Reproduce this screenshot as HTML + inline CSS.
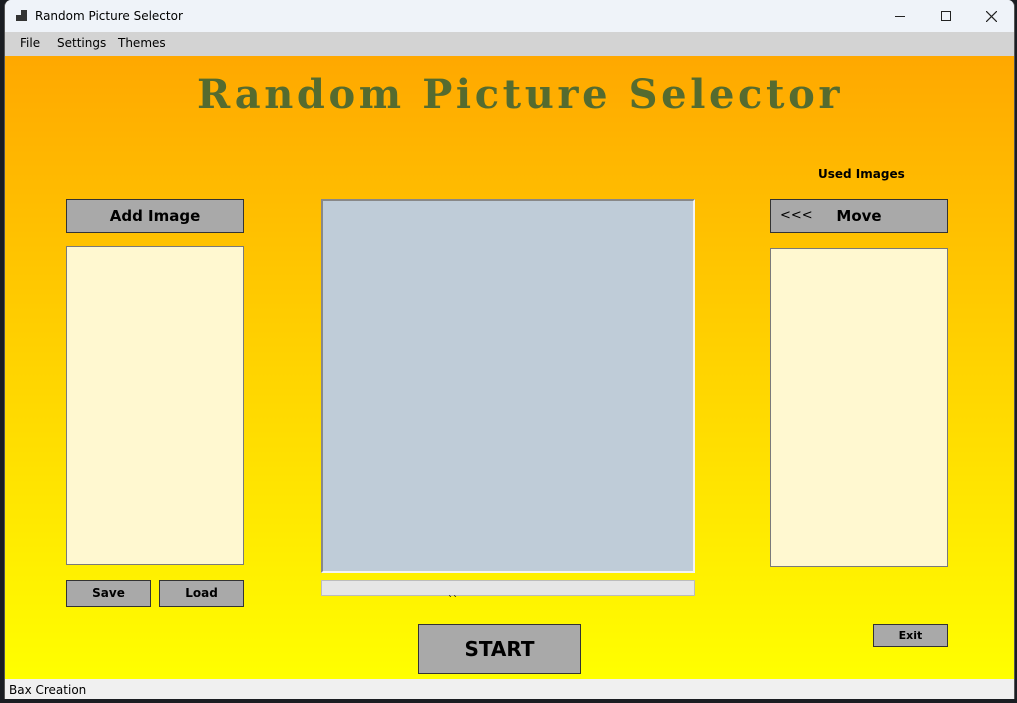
<!DOCTYPE html>
<html><head><style>
*{margin:0;padding:0;box-sizing:border-box}
body{width:1017px;height:703px;background:#1a1d22;position:relative;overflow:hidden;font-family:"Segoe UI","DejaVu Sans","Liberation Sans",sans-serif}
.win{position:absolute;left:4px;top:0;width:1011px;height:699px;background:#f0f0f0;border-radius:7px 7px 0 0;overflow:hidden;border-left:1px solid #555;border-right:1px solid #555}
.title{position:absolute;left:0;top:0;width:100%;height:32px;background:#eff3f9;font-size:12px;color:#000}
.menu{position:absolute;left:0;top:32px;width:100%;height:24px;background:#d3d3d3;font-size:12px}
.menu span{position:absolute;top:4px}
.main{position:absolute;left:0;top:56px;width:100%;height:623px;background:linear-gradient(#ffa800,#ffff00)}
.status{position:absolute;left:0;top:679px;width:100%;height:20px;background:#f0f0f0;font-size:12px}
.btn{position:absolute;background:#a9a9a9;border:1px solid #333;font-weight:bold;color:#000;text-align:center}
.list{position:absolute;background:#fff8d0;border:1px solid #7a7a7a}
.a{position:absolute}
</style></head><body>
<div class="win">
<div class="title">
<svg class="a" style="left:11px;top:10px" width="12" height="12"><rect x="0" y="5" width="5" height="6" fill="#333"/><rect x="5" y="0" width="6" height="11" fill="#333"/></svg>
<span class="a" style="left:30px;top:9px">Random Picture Selector</span>
<div class="a" style="left:890px;top:16px;width:10px;height:1px;background:#222"></div>
<div class="a" style="left:936px;top:11px;width:10px;height:10px;border:1px solid #222"></div>
<svg class="a" style="left:981px;top:11px" width="11" height="11"><path d="M0 0L11 11M11 0L0 11" stroke="#222" stroke-width="1.2"/></svg>
</div>
<div class="menu"><span style="left:15px">File</span><span style="left:52px">Settings</span><span style="left:113px">Themes</span></div>
<div class="main">
<div class="a" style="left:145px;top:15px;width:740px;text-align:center;font-family:'DejaVu Serif',serif;font-weight:bold;font-size:40px;color:#556b2f;letter-spacing:3.6px">Random Picture Selector</div>
<div class="a" style="left:813px;top:111px;font-size:12px;font-weight:bold">Used Images</div>
<div class="btn" style="left:61px;top:143px;width:178px;height:34px;font-size:15px;line-height:32px">Add Image</div>
<div class="list" style="left:61px;top:190px;width:178px;height:319px"></div>
<div class="btn" style="left:61px;top:524px;width:85px;height:27px;font-size:12px;line-height:25px">Save</div>
<div class="btn" style="left:154px;top:524px;width:85px;height:27px;font-size:12px;line-height:25px">Load</div>
<div class="a" style="left:316px;top:143px;width:374px;height:374px;background:#bfccd8;border:2px solid #f4f4f4;border-top-color:#888;border-left-color:#888"></div>
<div class="a" style="left:316px;top:524px;width:374px;height:16px;background:#e6e6e6;border:1px solid #bcbcbc"></div>
<div class="a" style="left:443px;top:539px;font-size:10px">``</div>
<div class="btn" style="left:413px;top:568px;width:163px;height:50px;font-size:20px;line-height:48px">START</div>
<div class="btn" style="left:765px;top:143px;width:178px;height:34px;font-size:15px;line-height:32px"><span class="a" style="left:9px;font-weight:normal;font-size:13px">&lt;&lt;&lt;</span>Move</div>
<div class="list" style="left:765px;top:192px;width:178px;height:319px"></div>
<div class="btn" style="left:868px;top:568px;width:75px;height:23px;font-size:11px;line-height:21px">Exit</div>
</div>
<div class="status"><span class="a" style="left:4px;top:4px">Bax Creation</span></div>
</div>
</body></html>
